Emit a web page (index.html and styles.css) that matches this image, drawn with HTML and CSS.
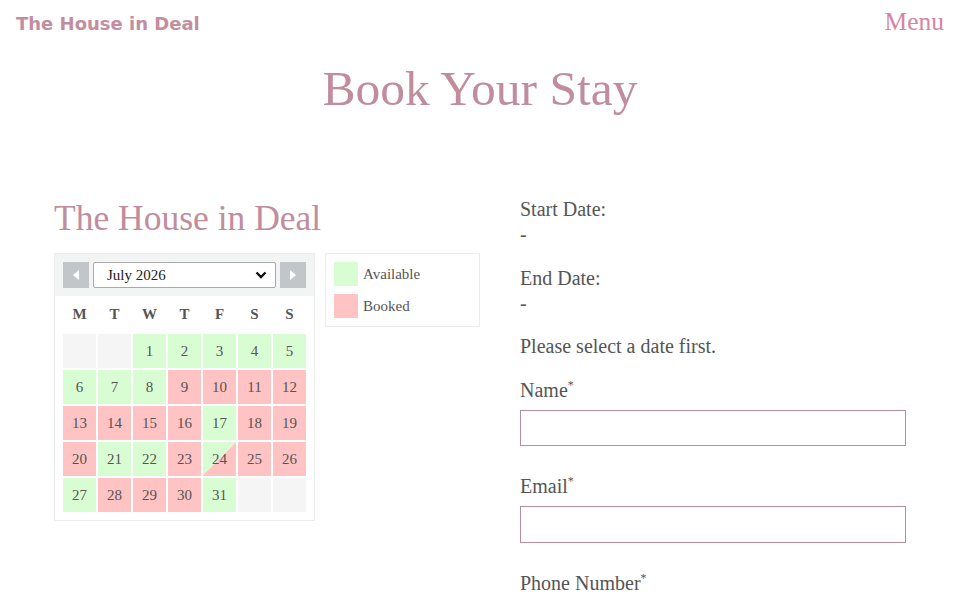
FILE: index.html
```html
<!DOCTYPE html>
<html lang="en">
<head>
<meta charset="utf-8">
<title>Book Your Stay - The House in Deal</title>
<link rel="stylesheet" href="styles.css">
</head>
<body>
<header class="site-header">
  <a class="logo" href="#">The House in Deal</a>
  <a class="menu" href="#">Menu</a>
</header>
<h1 class="page-title">Book Your Stay</h1>
<main class="booking">
  <section class="left">
    <h2 class="house-title">The House in Deal</h2>
    <div class="cal-row">
      <div class="calendar">
        <div class="cal-head">
          <button class="nav-btn" aria-label="Previous month"><svg width="8" height="10" viewBox="0 0 8 10"><polygon points="7,0 7,10 1,5" fill="#fff"/></svg></button>
          <div class="month-select">
            <span>July 2026</span>
            <svg width="12" height="8" viewBox="0 0 12 8"><polyline points="1.5,1.5 6,6 10.5,1.5" fill="none" stroke="#111" stroke-width="2.4"/></svg>
          </div>
          <button class="nav-btn" aria-label="Next month"><svg width="8" height="10" viewBox="0 0 8 10"><polygon points="1,0 1,10 7,5" fill="#fff"/></svg></button>
        </div>
        <div class="cal-body">
          <div class="wd">M</div><div class="wd">T</div><div class="wd">W</div><div class="wd">T</div><div class="wd">F</div><div class="wd">S</div><div class="wd">S</div>
          <div class="day empty"></div><div class="day empty"></div>
          <div class="day av">1</div><div class="day av">2</div><div class="day av">3</div><div class="day av">4</div><div class="day av">5</div>
          <div class="day av">6</div><div class="day av">7</div><div class="day av">8</div><div class="day bk">9</div><div class="day bk">10</div><div class="day bk">11</div><div class="day bk">12</div>
          <div class="day bk">13</div><div class="day bk">14</div><div class="day bk">15</div><div class="day bk">16</div><div class="day av">17</div><div class="day bk">18</div><div class="day bk">19</div>
          <div class="day bk">20</div><div class="day av">21</div><div class="day av">22</div><div class="day bk">23</div><div class="day split">24</div><div class="day bk">25</div><div class="day bk">26</div>
          <div class="day av">27</div><div class="day bk">28</div><div class="day bk">29</div><div class="day bk">30</div><div class="day av">31</div><div class="day empty"></div><div class="day empty"></div>
        </div>
      </div>
      <div class="legend">
        <div class="legend-item"><span class="swatch av"></span>Available</div>
        <div class="legend-item"><span class="swatch bk"></span>Booked</div>
      </div>
    </div>
  </section>
  <section class="right">
    <div class="info"><div>Start Date:</div><div>-</div></div>
    <div class="info"><div>End Date:</div><div>-</div></div>
    <p class="info">Please select a date first.</p>
    <div class="field"><label>Name<sup>*</sup></label><input type="text"></div>
    <div class="field"><label>Email<sup>*</sup></label><input type="email"></div>
    <div class="field"><label>Phone Number<sup>*</sup></label><input type="tel"></div>
  </section>
</main>
</body>
</html>
```
FILE: styles.css
```css
* { box-sizing: border-box; }
html, body { margin: 0; padding: 0; background: #fff; }
body {
  font-family: "Liberation Serif", "Times New Roman", serif;
  color: #555;
  overflow: hidden;
  height: 600px;
}
.site-header {
  display: flex;
  justify-content: space-between;
  align-items: center;
  height: 46px;
  padding: 0 16px;
}
.logo {
  font-family: "DejaVu Sans", sans-serif;
  font-weight: bold;
  font-size: 18px;
  color: #c48d9e;
  text-decoration: none;
}
.menu {
  font-size: 25.5px;
  color: #d685a1;
  text-decoration: none;
  margin-top: -2px;
}
.page-title {
  margin: 14px 0 0;
  text-align: center;
  font-weight: normal;
  font-size: 49.5px;
  line-height: 58px;
  color: #c08d9d;
}
.booking {
  width: 852px;
  margin: 76px auto 0;
  display: grid;
  grid-template-columns: 1fr 1fr;
}
.house-title {
  margin: 3px 0 14px;
  font-weight: normal;
  font-size: 35.5px;
  line-height: 42px;
  color: #c08d9d;
}
.cal-row { display: flex; gap: 10px; align-items: flex-start; }
.calendar {
  width: 261px;
  border: 1px solid #ececec;
}
.cal-head {
  background: #f3f4f4;
  padding: 8px;
  height: 42px;
  display: flex;
  gap: 4px;
}
.nav-btn {
  width: 26px;
  height: 26px;
  border: 0;
  padding: 0;
  background: #c3c6c8;
  display: flex;
  align-items: center;
  justify-content: center;
}
.month-select {
  flex: 1;
  height: 26px;
  background: #fff;
  border: 1px solid #a9a9a9;
  border-radius: 2px;
  display: flex;
  align-items: center;
  justify-content: space-between;
  padding: 0 8px 0 13px;
  font-size: 15px;
  color: #222;
}
.cal-body {
  padding: 0 8px 8px;
  display: grid;
  grid-template-columns: repeat(7, 33px);
  grid-template-rows: 36px;
  grid-auto-rows: 34px;
  gap: 2px;
}
.wd {
  display: flex;
  align-items: center;
  justify-content: center;
  font-weight: bold;
  font-size: 15px;
  color: #555;
}
.day {
  display: flex;
  align-items: center;
  justify-content: center;
  font-size: 15px;
  color: #555;
}
.av { background: #d9fdd2; }
.bk { background: #ffc3c3; }
.empty { background: #f5f5f5; }
.split { background: linear-gradient(to bottom right, #d9fdd2 50%, #ffc3c3 50%); }
.legend {
  width: 155px;
  border: 1px solid #ececec;
  padding: 8px;
  display: flex;
  flex-direction: column;
  gap: 8px;
}
.legend-item {
  display: flex;
  align-items: center;
  gap: 5px;
  font-size: 15px;
  height: 24px;
}
.swatch { width: 24px; height: 24px; display: block; }
.right {
  padding-left: 40px;
  padding-top: 3px;
  font-size: 20px;
  line-height: 25px;
}
.info { margin: 0 0 18.5px; }
.field { margin-bottom: 28px; }
.field label { display: block; margin-bottom: 7px; }
.field sup { font-size: 12px; line-height: 0; vertical-align: 8px; }
.field input {
  display: block;
  width: 386px;
  height: 36.5px;
  border: 1px solid #b88e9c;
  background: #fff;
  padding: 0 8px;
  font: inherit;
}
```
